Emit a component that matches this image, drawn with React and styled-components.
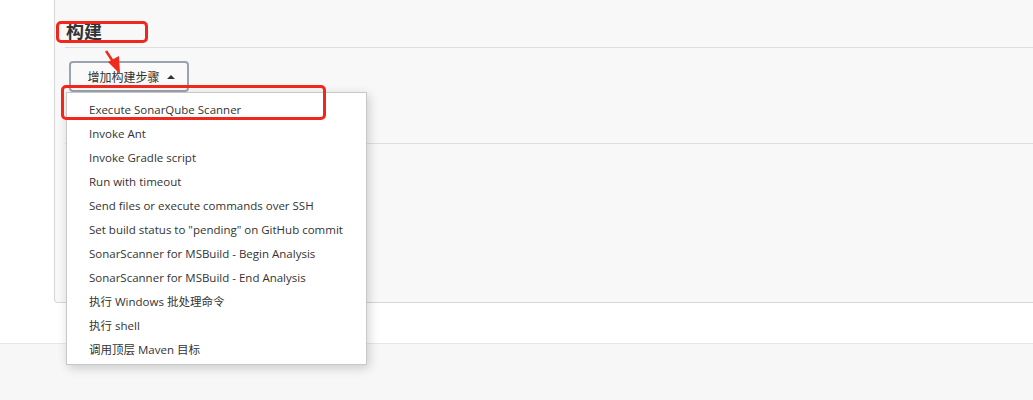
import styled, { createGlobalStyle } from "styled-components";

const GlobalStyle = createGlobalStyle`
  html, body {
    margin: 0;
    padding: 0;
    background: #fff;
  }
  body {
    font-family: "Open Sans", "Noto Sans CJK SC", sans-serif;
    color: #333;
  }
`;

const steps = [
  "Execute SonarQube Scanner",
  "Invoke Ant",
  "Invoke Gradle script",
  "Run with timeout",
  "Send files or execute commands over SSH",
  'Set build status to "pending" on GitHub commit',
  "SonarScanner for MSBuild - Begin Analysis",
  "SonarScanner for MSBuild - End Analysis",
  "执行 Windows 批处理命令",
  "执行 shell",
  "调用顶层 Maven 目标",
];

const App = () => {
  return (
    <Page>
      <GlobalStyle />
      <Main>
        <Gutter />
        <Panel>
          <SectionHeader>
            <Heading>构建</Heading>
          </SectionHeader>
          <BuildArea>
            <Dropdown>
              <AddButton>
                增加构建步骤
                <Caret />
              </AddButton>
              <Menu>
                {steps.map((step) => (
                  <MenuItem key={step}>{step}</MenuItem>
                ))}
              </Menu>
              <Highlight $left={-8} $top={24} $width={265} $height={35} />
            </Dropdown>
          </BuildArea>
          <Highlight $left={1} $top={21} $width={92} $height={22} />
          <Arrow width="18" height="26" viewBox="0 0 18 26">
            <line x1="1" y1="1" x2="9" y2="13" stroke="#f02a1c" strokeWidth="2.5" />
            <polygon points="3,12 14,6 15,24" fill="#f02a1c" />
          </Arrow>
        </Panel>
      </Main>
      <Spacer />
      <Footer />
    </Page>
  );
};

export default App;

const Page = styled.div`
  height: 400px;
  display: flex;
  flex-direction: column;
  overflow: hidden;
`;

const Main = styled.div`
  display: flex;
  height: 303px;
`;

const Gutter = styled.div`
  width: 54px;
  flex-shrink: 0;
`;

const Panel = styled.div`
  flex: 1;
  position: relative;
  background: #f8f8f8;
  border-left: 1px solid #d6d6d6;
  border-bottom: 1px solid #d6d6d6;
  border-bottom-left-radius: 4px;
  padding-left: 10px;
  z-index: 1;
`;

const SectionHeader = styled.div`
  height: 48px;
  box-sizing: border-box;
  border-bottom: 1px solid #dedede;
  display: flex;
  align-items: flex-end;
  padding: 0 0 5px 1px;
`;

const Heading = styled.h2`
  margin: 0;
  font-size: 18px;
  font-weight: 700;
  line-height: 22px;
  color: #333;
`;

const BuildArea = styled.div`
  height: 96px;
  box-sizing: border-box;
  border-bottom: 1px solid #dedede;
  padding: 13px 0 0 4px;
`;

const Dropdown = styled.div`
  position: relative;
  display: inline-block;
`;

const AddButton = styled.button`
  width: 120px;
  height: 31px;
  box-sizing: border-box;
  border: 2px solid #9ba4ae;
  border-radius: 4px;
  background: #fafafa;
  font-family: "Open Sans", "Noto Sans CJK SC", sans-serif;
  font-size: 12px;
  color: #333;
  display: flex;
  align-items: center;
  justify-content: center;
  gap: 7px;
  padding: 0 0 0 4px;
  cursor: pointer;
`;

const Caret = styled.span`
  width: 0;
  height: 0;
  border-left: 4px solid transparent;
  border-right: 4px solid transparent;
  border-bottom: 4px solid #333;
`;

const Menu = styled.ul`
  position: absolute;
  left: -3px;
  top: 31px;
  width: 301px;
  box-sizing: border-box;
  margin: 0;
  padding: 5px 0 2px;
  list-style: none;
  background: #fff;
  border: 1px solid #c8c8c8;
  box-shadow: 2px 3px 10px rgba(0, 0, 0, 0.18);
`;

const MenuItem = styled.li`
  height: 24px;
  line-height: 24px;
  padding-left: 22px;
  font-size: 11.5px;
  color: #333;
  white-space: nowrap;
`;

const Highlight = styled.div`
  position: absolute;
  left: ${(p) => p.$left}px;
  top: ${(p) => p.$top}px;
  width: ${(p) => p.$width}px;
  height: ${(p) => p.$height}px;
  box-sizing: border-box;
  border: 3px solid #f2261b;
  border-radius: 5px;
  pointer-events: none;
`;

const Arrow = styled.svg`
  position: absolute;
  left: 50px;
  top: 50px;
  z-index: 2;
`;

const Spacer = styled.div`
  height: 40px;
  flex-shrink: 0;
`;

const Footer = styled.div`
  flex: 1;
  background: #f7f7f7;
  border-top: 1px solid #e6e6e6;
`;
